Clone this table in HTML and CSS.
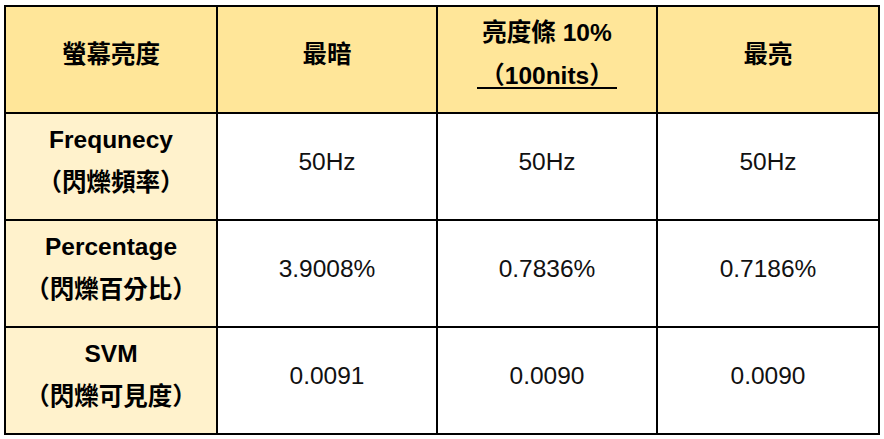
FILE: index.html
```html
<!DOCTYPE html>
<html lang="zh-Hant">
<head>
<meta charset="utf-8">
<title>螢幕亮度</title>
<link rel="stylesheet" href="styles.css">
</head>
<body>
<table class="flicker">
  <colgroup>
    <col class="c1">
    <col class="c2">
    <col class="c3">
    <col class="c4">
  </colgroup>
  <thead>
    <tr class="head-row">
      <th>螢幕亮度</th>
      <th>最暗</th>
      <th>亮度條 10%<br><span class="ul">（100nits）</span></th>
      <th>最亮</th>
    </tr>
  </thead>
  <tbody>
    <tr>
      <th class="label">Frequnecy<br>（閃爍頻率）</th>
      <td>50Hz</td>
      <td>50Hz</td>
      <td>50Hz</td>
    </tr>
    <tr>
      <th class="label">Percentage<br>（閃爍百分比）</th>
      <td>3.9008%</td>
      <td>0.7836%</td>
      <td>0.7186%</td>
    </tr>
    <tr>
      <th class="label">SVM<br>（閃爍可見度）</th>
      <td>0.0091</td>
      <td>0.0090</td>
      <td>0.0090</td>
    </tr>
  </tbody>
</table>
</body>
</html>
```

FILE: styles.css
```css
html, body {
  margin: 0;
  padding: 0;
  background: #ffffff;
}

body {
  padding: 5px 0 0 4px;
  font-family: "Liberation Sans", Arial, "Noto Sans CJK TC", sans-serif;
  color: #000000;
}

.flicker {
  border-collapse: collapse;
  table-layout: fixed;
  width: 874px;
  font-size: 24.5px;
}

.c1 { width: 212px; }
.c2 { width: 220px; }
.c3 { width: 220px; }
.c4 { width: 222px; }

.flicker tr {
  height: 107px;
}

.flicker th,
.flicker td {
  border: 2px solid #000000;
  padding: 0 0 11px 0;
  text-align: center;
  vertical-align: middle;
  line-height: 43px;
}

.flicker th {
  font-weight: bold;
}

.flicker td {
  font-weight: normal;
  color: #111111;
}

.head-row th {
  background: #ffe699;
}

.flicker th.label {
  background: #fff2cc;
}

.ul {
  padding: 0 3px;
  background: linear-gradient(#000000, #000000) left bottom / 100% 2px no-repeat;
}
```
